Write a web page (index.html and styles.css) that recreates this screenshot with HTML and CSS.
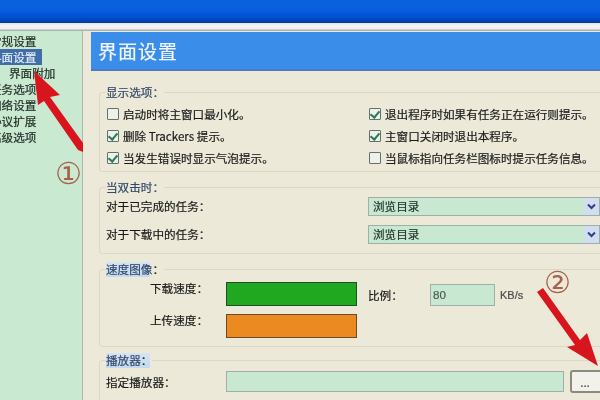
FILE: index.html
```html
<!DOCTYPE html>
<html lang="zh-CN">
<head>
    <meta charset="UTF-8">
    <title>界面设置</title>
    <link rel="stylesheet" href="styles.css">
</head>
<body>
    <div class="screen">
        <div class="titlebar"></div>
        <div class="menu-strip"></div>
        <div class="main">
            <!-- 左侧树 -->
            <ul class="tree">
                <li>常规设置</li>
                <li class="selected"><span>界面设置</span></li>
                <li class="child">界面附加</li>
                <li>任务选项</li>
                <li>网络设置</li>
                <li>协议扩展</li>
                <li>高级选项</li>
            </ul>

            <div class="panel">
                <div class="panel-title">界面设置</div>

                <fieldset class="group group-display">
                    <legend>显示选项：</legend>
                    <div class="check-grid">
                        <label class="check"><i class="box"></i>启动时将主窗口最小化。</label>
                        <label class="check"><i class="box on"></i>退出程序时如果有任务正在运行则提示。</label>
                        <label class="check"><i class="box on"></i>删除 Trackers 提示。</label>
                        <label class="check"><i class="box on"></i>主窗口关闭时退出本程序。</label>
                        <label class="check"><i class="box on"></i>当发生错误时显示气泡提示。</label>
                        <label class="check"><i class="box"></i>当鼠标指向任务栏图标时提示任务信息。</label>
                    </div>
                </fieldset>

                <fieldset class="group group-click">
                    <legend>当双击时：</legend>
                    <div class="select-row">
                        <span>对于已完成的任务：</span>
                        <div class="select">浏览目录<b class="drop"><svg width="9" height="7" viewBox="0 0 9 7"><path d="M1 1.5l3.5 3.5L8 1.5" fill="none" stroke="#2b3f8c" stroke-width="2"/></svg></b></div>
                    </div>
                    <div class="select-row">
                        <span>对于下载中的任务：</span>
                        <div class="select">浏览目录<b class="drop"><svg width="9" height="7" viewBox="0 0 9 7"><path d="M1 1.5l3.5 3.5L8 1.5" fill="none" stroke="#2b3f8c" stroke-width="2"/></svg></b></div>
                    </div>
                </fieldset>

                <fieldset class="group group-speed">
                    <legend class="marked">速度图像<em>：</em></legend>
                    <div class="speed-layout">
                        <div class="speed-rows">
                            <div class="speed-row"><span>下载速度：</span><i class="swatch green"></i></div>
                            <div class="speed-row"><span>上传速度：</span><i class="swatch orange"></i></div>
                        </div>
                        <div class="ratio">
                            <span class="ratio-label">比例：</span>
                            <div class="input ratio-input">80</div>
                            <span class="unit">KB/s</span>
                        </div>
                    </div>
                </fieldset>

                <fieldset class="group group-player">
                    <legend class="marked">播放器<em>：</em></legend>
                    <div class="player-row">
                        <span>指定播放器：</span>
                        <div class="input player-input"></div>
                        <div class="browse">...</div>
                    </div>
                </fieldset>
            </div>
        </div>

        <!-- 截图上的标注 -->
        <svg class="arrows" width="600" height="400" viewBox="0 0 600 400">
            <path d="M34 71L60 95L50 97L83 143L83 152L78 150L44 101L38 105Z" fill="#d8141c"/>
            <path d="M537 292L543 288L580 340L587 333L598 366L567 347L575 345Z" fill="#d8141c"/>
        </svg>
        <span class="mark mark-one">①</span>
        <span class="mark mark-two">②</span>
    </div>
</body>
</html>
```

FILE: styles.css
```css
* {
    margin: 0;
    padding: 0;
    box-sizing: border-box;
}

body {
    width: 600px;
    height: 400px;
    overflow: hidden;
    background: #ece9d8;
    font-family: "Noto Sans CJK SC", "Liberation Sans", sans-serif;
    font-size: 11.6px;
    color: #1a1a1a;
    -webkit-text-stroke: 0.2px;
}

.screen {
    position: relative;
    width: 600px;
    height: 400px;
    overflow: hidden;
    display: flex;
    flex-direction: column;
    filter: blur(0.45px);
}

.titlebar {
    height: 23px;
    flex: none;
    background: linear-gradient(#0b62dc 0%, #0a5fe0 40%, #0050d0 75%, #003a9c 100%);
}

.menu-strip {
    height: 8px;
    flex: none;
    background: linear-gradient(#dfe4ea 0%, #f4f4f4 35%, #eeeeee 70%, #9ba0a4 100%);
}

.main {
    flex: 1;
    display: flex;
    min-height: 0;
}

/* Tree */
.tree {
    width: 83px;
    flex: none;
    list-style: none;
    background: #c9e9d1;
    border-right: 1px solid #a9b9b0;
    padding-top: 2px;
    overflow: hidden;
}

.tree li {
    height: 16px;
    line-height: 16px;
    margin-left: -10px;
    white-space: nowrap;
    color: #1c2a22;
}

.tree .selected span {
    display: block;
    width: 52px;
    padding-left: 4px;
    margin-left: 0;
    background: #3f6ea8;
    color: #e8eef6;
    text-indent: -4px;
}

.tree .child {
    margin-left: 9px;
}

/* Right panel */
.panel {
    flex: 1;
    min-width: 0;
    padding: 1px 0 0 8px;
    background: #ece9d8;
}

.panel-title {
    height: 39px;
    margin-bottom: 14px;
    padding-left: 7px;
    line-height: 38px;
    background: #3a8eea;
    border-bottom: 2px solid #4a7cc0;
    color: #f2f6fb;
    font-size: 19px;
    letter-spacing: 1px;
}

.group {
    width: 508px;
    margin-left: 8px;
    border: 1px solid #dbd8c6;
    border-right: 0;
    border-radius: 4px 0 0 4px;
    padding: 0 0 0 6px;
}

.group legend {
    margin-left: 0;
    height: 15px;
    line-height: 15px;
    font-size: 11.6px;
    color: #33486a;
}

.group em {
    font-style: normal;
    color: #1a1a1a;
}

.group .marked {
    background: linear-gradient(#d4e4f4, #c4daf0);
    background-size: 44px 100%;
    background-repeat: no-repeat;
}

.group-display {
    height: 87px;
    margin-bottom: 8px;
}

.group-click {
    height: 74px;
    margin-bottom: 8px;
}

.group-speed {
    height: 85px;
    margin-bottom: 6px;
}

.group-player {
    height: 60px;
}

/* Checkboxes */
.check-grid {
    display: grid;
    grid-template-columns: 262px 1fr;
    grid-auto-rows: 22px;
    padding: 3px 0 0 1px;
}

.check {
    display: flex;
    align-items: center;
    white-space: nowrap;
}

.box {
    position: relative;
    width: 12px;
    height: 12px;
    margin-right: 4px;
    flex: none;
    background: #eef1ea;
    border: 1px solid #62716f;
    border-radius: 1px;
}

.box.on::after {
    content: "";
    position: absolute;
    left: 2px;
    top: 0;
    width: 4px;
    height: 7px;
    border: solid #2d7a5a;
    border-width: 0 2px 2px 0;
    transform: rotate(40deg);
}

/* Selects */
.select-row {
    display: grid;
    grid-template-columns: 262px 232px;
    align-items: center;
    height: 19px;
    margin-bottom: 9px;
}

.group-click .select-row:first-of-type {
    margin-top: 2px;
}

.select-row > span {
    position: relative;
    top: -1px;
}

.select {
    position: relative;
    height: 19px;
    line-height: 17px;
    padding-left: 4px;
    background: #c9e8d2;
    border: 1px solid #9fb0a8;
    color: #24352c;
}

.drop {
    position: absolute;
    top: 0;
    right: 0;
    width: 15px;
    height: 17px;
    display: flex;
    align-items: center;
    justify-content: center;
    background: #d2def0;
}

/* Speed colours */
.speed-layout {
    display: flex;
}

.speed-rows {
    width: 262px;
    display: flex;
    flex-direction: column;
    gap: 8px;
    padding-top: 5px;
}

.speed-row {
    display: flex;
    align-items: flex-start;
    padding-left: 44px;
}

.speed-row span {
    width: 76px;
    line-height: 13px;
}

.swatch {
    display: block;
    width: 131px;
    height: 24px;
    border: 1px solid #1c5028;
}

.swatch.green {
    background: #1fa820;
}

.swatch.orange {
    background: #ea8a20;
    border-color: #6e4a28;
}

.ratio {
    display: flex;
    align-items: center;
    height: 22px;
    margin-top: 7px;
}

.ratio-label {
    width: 62px;
}

.input {
    background: #c9e8d2;
    border: 1px solid #9fb0a8;
}

.ratio-input {
    width: 65px;
    height: 22px;
    line-height: 20px;
    padding-left: 2px;
    font-family: "Liberation Sans", sans-serif;
    color: #4a5a50;
}

.unit {
    margin-left: 5px;
    font-family: "Liberation Sans", sans-serif;
    font-size: 11px;
    color: #4a4a4a;
}

/* Player */
.player-row {
    display: flex;
    align-items: center;
    padding-top: 2px;
}

.player-row > span {
    width: 120px;
}

.player-input {
    width: 338px;
    height: 21px;
}

.browse {
    width: 40px;
    height: 23px;
    margin-left: 6px;
    line-height: 20px;
    text-align: center;
    padding-right: 10px;
    background: #f2f2ea;
    border: 2px solid #8a8a80;
    border-radius: 3px;
    color: #444;
}

/* Annotations */
.arrows {
    position: absolute;
    left: 0;
    top: 0;
}

.mark {
    position: absolute;
    font-family: "DejaVu Sans", sans-serif;
    font-size: 30px;
    line-height: 30px;
    color: #a8604c;
    -webkit-text-stroke: 0;
}

.mark-one {
    left: 55px;
    top: 159px;
}

.mark-two {
    left: 544px;
    top: 268px;
}
```
